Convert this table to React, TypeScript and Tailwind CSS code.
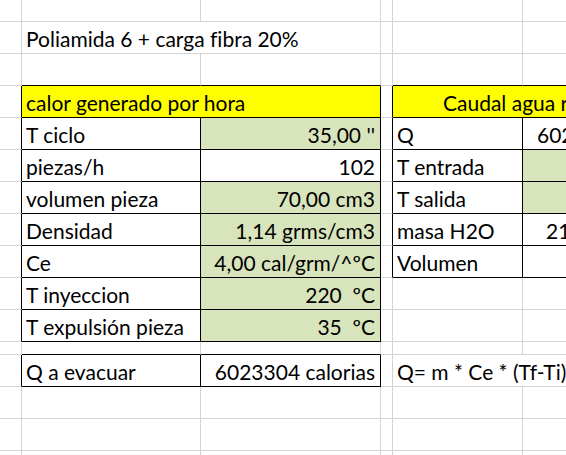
import React from "react";

type Cell = {
  col: number;
  span?: number;
  text?: string;
  align?: "left" | "right";
  bg?: "yellow" | "green";
  pad?: string;
};

// filas y columnas visibles de la hoja
const ROWS = 16;
const COLS = 6;

// zonas con borde negro (tablas)
const boxes = [
  { r0: 3, r1: 10, c0: 1, c1: 2 },
  { r0: 3, r1: 8, c0: 4, c1: 5 },
  { r0: 12, r1: 12, c0: 1, c1: 2 },
];

const bordered = (r: number, c: number) =>
  boxes.some((b) => r >= b.r0 && r <= b.r1 && c >= b.c0 && c <= b.c1);

const sheet: Record<number, Cell[]> = {
  1: [{ col: 1, span: 2, text: "Poliamida 6 + carga fibra 20%" }],
  3: [
    { col: 1, span: 2, text: "calor generado por hora", bg: "yellow" },
    { col: 4, span: 2, text: "Caudal agua refrigeración", bg: "yellow", pad: "pl-[50px]" },
  ],
  4: [
    { col: 1, text: "T ciclo" },
    { col: 2, text: "35,00 ''", align: "right", bg: "green" },
    { col: 4, text: "Q" },
    { col: 5, text: "6023304 calorias", pad: "pl-[14px]" },
  ],
  5: [
    { col: 1, text: "piezas/h" },
    { col: 2, text: "102", align: "right" },
    { col: 4, text: "T entrada" },
    { col: 5, bg: "green" },
  ],
  6: [
    { col: 1, text: "volumen pieza" },
    { col: 2, text: "70,00 cm3", align: "right", bg: "green" },
    { col: 4, text: "T salida" },
    { col: 5, bg: "green" },
  ],
  7: [
    { col: 1, text: "Densidad" },
    { col: 2, text: "1,14 grms/cm3", align: "right", bg: "green" },
    { col: 4, text: "masa H2O" },
    { col: 5, text: "215118 grms", pad: "pl-[23px]" },
  ],
  8: [
    { col: 1, text: "Ce" },
    { col: 2, text: "4,00 cal/grm/^ºC", align: "right", bg: "green" },
    { col: 4, text: "Volumen" },
  ],
  9: [
    { col: 1, text: "T inyeccion" },
    { col: 2, text: "220  ºC", align: "right", bg: "green" },
  ],
  10: [
    { col: 1, text: "T expulsión pieza" },
    { col: 2, text: "35  ºC", align: "right", bg: "green" },
  ],
  12: [
    { col: 1, text: "Q a evacuar" },
    { col: 2, text: "6023304 calorias", align: "right" },
    { col: 4, span: 2, text: "Q= m * Ce * (Tf-Ti)" },
  ],
};

function rowCells(r: number): Cell[] {
  const given = sheet[r] ?? [];
  const out: Cell[] = [];
  let c = 0;
  while (c < COLS) {
    const found = given.find((x) => x.col === c);
    if (found) {
      out.push(found);
      c += found.span ?? 1;
    } else {
      out.push({ col: c });
      c += 1;
    }
  }
  return out;
}

function SheetCell({ r, cell }: { r: number; cell: Cell }) {
  const span = cell.span ?? 1;
  const last = cell.col + span - 1;
  let bottomBlack = false;
  for (let c = cell.col; c <= last; c++) {
    if (bordered(r, c) || bordered(r + 1, c)) bottomBlack = true;
  }
  const rightBlack = bordered(r, last) || bordered(r, last + 1);

  const bg =
    cell.bg === "yellow"
      ? "bg-[#ffff00]"
      : cell.bg === "green"
      ? "bg-[#d8e4bc]"
      : "bg-white";

  return (
    <div
      className={`flex items-end overflow-visible whitespace-pre border-r border-b pb-[4px] ${
        span === 2 ? "col-span-2" : ""
      } ${rightBlack ? "border-r-black" : "border-r-[#d4d4d4]"} ${
        bottomBlack ? "border-b-black" : "border-b-[#d4d4d4]"
      } ${bg} ${
        cell.align === "right" ? "justify-end pr-[5px]" : cell.pad ?? "pl-[4px]"
      }`}
    >
      {cell.text && <span className="leading-none">{cell.text}</span>}
    </div>
  );
}

export default function App() {
  return (
    <div
      className="w-[566px] h-[455px] overflow-hidden bg-white text-black text-[21px] [font-variant-ligatures:none]"
      style={{ fontFamily: "Lato, 'Open Sans', sans-serif" }}
    >
      <div className="grid grid-cols-[22px_179px_180px_12px_130px_130px] grid-rows-[22px_32px_32px_32px_32px_32px_32px_32px_32px_32px_32px_13px_32px_32px_32px_32px]">
        {Array.from({ length: ROWS }).map((_, r) =>
          rowCells(r).map((cell) => (
            <SheetCell key={`${r}-${cell.col}`} r={r} cell={cell} />
          ))
        )}
      </div>
    </div>
  );
}
